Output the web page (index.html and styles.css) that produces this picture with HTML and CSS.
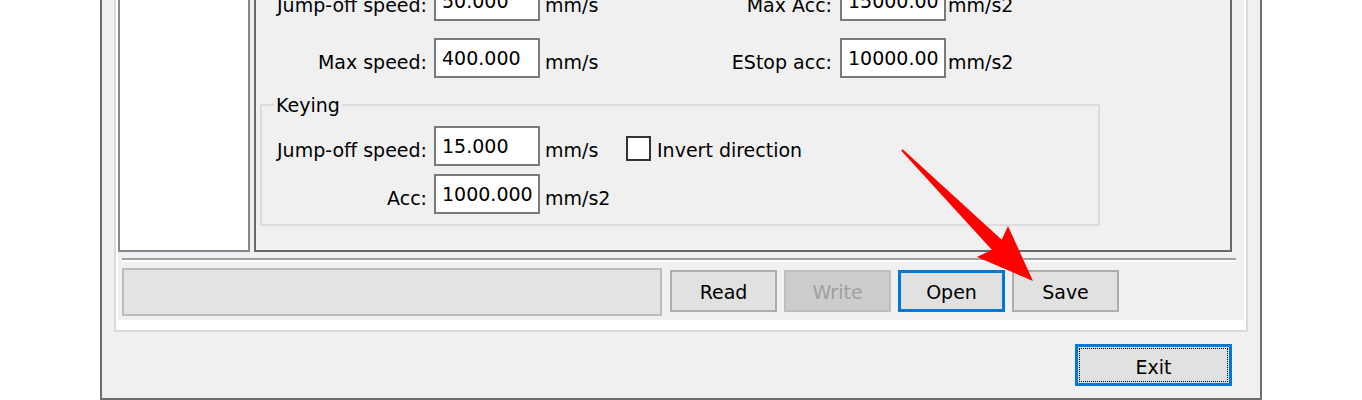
FILE: index.html
```html
<!DOCTYPE html>
<html>
<head>
<title>Parameter Settings</title>
<link rel="stylesheet" href="styles.css">
</head>
<body>

<div class="window">
  <div class="tabs">
    <div class="page">
      <div class="main">
        <div class="listbox"></div>
        <div class="panel">
          <div class="row first">
            <label class="lbl">Jump-off speed:</label>
            <input class="field" value="50.000">
            <span class="unit">mm/s</span>
            <label class="lbl2">Max Acc:</label>
            <input class="field" value="15000.00">
            <span class="unit2">mm/s2</span>
          </div>
          <div class="row">
            <label class="lbl">Max speed:</label>
            <input class="field" value="400.000">
            <span class="unit">mm/s</span>
            <label class="lbl2">EStop acc:</label>
            <input class="field" value="10000.00">
            <span class="unit2">mm/s2</span>
          </div>
          <fieldset class="group">
            <legend>Keying</legend>
            <div class="row first">
              <label class="lbl">Jump-off speed:</label>
              <input class="field" value="15.000">
              <span class="unit short">mm/s</span>
              <input type="checkbox" class="check" id="invert">
              <label for="invert" class="check-text">Invert direction</label>
            </div>
            <div class="row">
              <label class="lbl">Acc:</label>
              <input class="field" value="1000.000">
              <span class="unit">mm/s2</span>
            </div>
          </fieldset>
        </div>
      </div>
      <div class="sep"></div>
      <div class="bar">
        <div class="status"></div>
        <button class="btn">Read</button>
        <button class="btn" disabled>Write</button>
        <button class="btn active">Open</button>
        <button class="btn">Save</button>
      </div>
    </div>
  </div>
  <div class="footer">
    <button class="btn exit"><span class="focus">Exit</span></button>
  </div>
</div>

<!-- red annotation arrow pointing at Save -->
<svg class="arrow" width="1362" height="400" viewBox="0 0 1362 400">
  <polygon fill="#ff0000" points="902.7,149.3 1001.7,239.8 1008,226 1033,281 977,257 991.8,249.7 901.3,150.7"/>
</svg>

</body>
</html>
```

FILE: styles.css
```css
body {
  margin: 0;
  height: 400px;
  overflow: hidden;
  background-color: #fff;
  font-family: "DejaVu Sans", sans-serif;
  font-size: 19px;
  color: #000;
  position: relative; /* for the arrow overlay */
}

/* outer dialog frame, top is scrolled off */
.window {
  margin-top: -50px;
  margin-left: 100px;
  width: 1162px;
  box-sizing: border-box;
  border: 2px solid #6e6e6e;
  background-color: #f0f0f0;
  padding: 12px;
}

.tabs {
  border: 2px solid #dadada;
  background-color: #fff;
  padding: 0 2px 10px 2px;
}

.page {
  background-color: #f0f0f0;
  padding-bottom: 4px;
}

.main {
  display: flex;
  gap: 4px;
}

.listbox {
  width: 132px;
  box-sizing: border-box;
  border: 2px solid #828790;
  background-color: #fff;
}

.panel {
  flex: 1;
  margin-right: 12px;
  border: 2px solid #696969;
  padding-top: 13px;
}

.row {
  display: flex;
  align-items: center;
  height: 40px;
  margin-top: 17px;
}

.row.first {
  margin-top: 0;
}

/* labels sit a little below the box centre, like the win32 dialog */
.lbl, .lbl2, .unit, .unit2 {
  padding-top: 7px;
}

.lbl {
  width: 171px;
  margin-right: 7px;
  text-align: right;
  white-space: nowrap;
}

.lbl2 {
  width: 197px;
  margin-right: 8px;
  text-align: right;
  white-space: nowrap;
}

.field {
  width: 106px;
  height: 40px;
  box-sizing: border-box;
  border: 2px solid #7a7a7a;
  background-color: #fff;
  padding: 0 6px;
  margin: 0;
  font-family: inherit;
  font-size: 19px;
  color: #000;
  outline: none;
}

.unit {
  width: 90px;
  margin-left: 5px;
}

.unit.short {
  width: 81px;
}

.unit2 {
  margin-left: 2px;
}

/* Keying group box */
.group {
  width: 840px;
  box-sizing: border-box;
  margin: 15px 0 24px 4px;
  border: 2px solid #dcdcdc;
  padding: 0 0 10px 0;
}

.group legend {
  margin-left: 12px;
  padding: 0 2px;
  line-height: 24px;
}

.group .lbl {
  width: 165px;
}

.group .row.first {
  margin-top: 9px;
}

.group .row {
  margin-top: 8px;
}

.check {
  appearance: none;
  width: 25px;
  height: 25px;
  box-sizing: border-box;
  margin: 0;
  border: 2px solid #333;
  background-color: #fff;
  position: relative;
  top: 2px;
}

.check-text {
  margin-left: 6px;
  position: relative;
  top: 4px;
}

.sep {
  margin: 6px 8px 0 4px;
  height: 2px;
  background-color: #a0a0a0;
  border-bottom: 2px solid #fff;
}

.bar {
  display: flex;
  align-items: flex-start;
  margin-top: 6px;
  padding-left: 4px;
  gap: 7px;
}

.status {
  width: 540px;
  height: 48px;
  box-sizing: border-box;
  border: 2px solid #bcbcbc;
  background-color: #e3e3e3;
  margin-right: 1px;
}

.btn {
  width: 107px;
  height: 42px;
  margin-top: 2px;
  box-sizing: border-box;
  border: 2px solid #adadad;
  background-color: #e1e1e1;
  font-family: inherit;
  font-size: 19px;
  color: #000;
  padding: 2px 0 0 0;
}

.btn:disabled {
  background-color: #cccccc;
  border-color: #bfbfbf;
  color: #a0a0a0;
}

.btn.active {
  border: 3px solid #0078d7;
}

.footer {
  display: flex;
  justify-content: flex-end;
  margin-top: 12px;
  padding-right: 16px;
}

.btn.exit {
  width: 157px;
  margin-top: 0;
  border: 3px solid #0078d7;
  padding: 1px;
}

.focus {
  display: flex;
  align-items: center;
  justify-content: center;
  height: 100%;
  padding-top: 3px;
  border: 1px dotted #000;
  box-sizing: border-box;
}

.arrow {
  position: absolute;
  left: 0;
  top: 0;
  pointer-events: none;
}
```
